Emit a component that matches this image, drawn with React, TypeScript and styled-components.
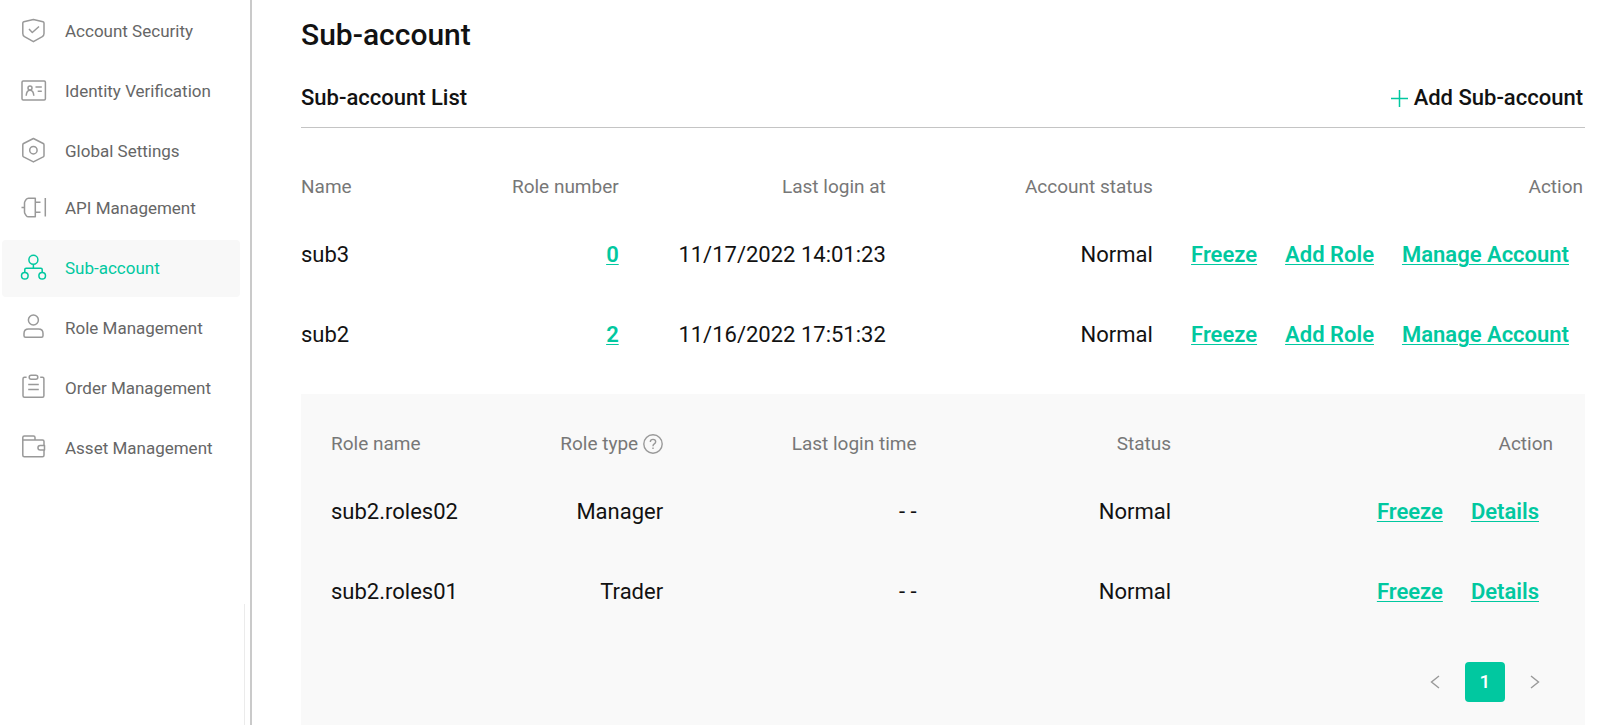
import React from "react";
import styled, { createGlobalStyle } from "styled-components";

const GlobalStyle = createGlobalStyle`
  *, *::before, *::after { box-sizing: border-box; }
  body {
    margin: 0;
    background: #fff;
    color: #121212;
    font-family: Roboto, "Liberation Sans", sans-serif;
    font-size: 22px;
    line-height: 28px;
  }
`;

const green = "#01c8a0";

const Page = styled.div`
  display: flex;
  min-height: 100vh;
`;

const Sidebar = styled.aside`
  display: flex;
  flex-direction: column;
  flex: none;
  width: 252px;
  padding: 3px 5px 0 2px;
  border-right: 2px solid #cacaca;
`;

const Nav = styled.nav`
  margin-right: 5px;
  padding-bottom: 127px;
`;

const NavGroup = styled.ul`
  display: flex;
  flex-direction: column;
  gap: 3px;
  margin: 0;
  padding: 0;
  list-style: none;
`;

const NavLink = styled.a<{ $active?: boolean }>`
  display: flex;
  align-items: center;
  gap: 17px;
  height: 57px;
  padding: 0 0 1px 18px;
  border-radius: 4px;
  background: ${(p) => (p.$active ? "#f8f8f8" : "transparent")};
  color: ${(p) => (p.$active ? green : "#666")};
  font-size: 17px;
  line-height: 24px;
  white-space: nowrap;
  text-decoration: none;
`;

const NavIcon = styled.svg<{ $active?: boolean }>`
  flex: none;
  width: 28px;
  height: 28px;
  fill: none;
  stroke: ${(p) => (p.$active ? green : "#999")};
  stroke-width: 1.5;
  stroke-linejoin: round;
`;

const SidebarEdge = styled.div`
  flex: 1;
  border-right: 1px solid #ebebeb;
`;

const Main = styled.main`
  display: flex;
  flex-direction: column;
  flex: 1;
  min-width: 0;
  padding: 17px 15px 0 49px;
`;

const Title = styled.h1`
  margin: 0;
  font-size: 30px;
  font-weight: 500;
  line-height: 36px;
`;

const ListHeader = styled.header`
  display: flex;
  align-items: center;
  justify-content: space-between;
  margin-top: 15px;
  padding: 16px 2px 15px 0;
  border-bottom: 1px solid #c4c4c4;
`;

const ListTitle = styled.h2`
  margin: 0;
  font-size: 22px;
  font-weight: 500;
  line-height: 28px;
`;

const AddButton = styled.button`
  display: flex;
  align-items: center;
  gap: 6px;
  padding: 0;
  border: 0;
  background: none;
  color: inherit;
  font: inherit;
  font-weight: 500;
  cursor: pointer;

  svg {
    width: 17px;
    height: 17px;
    stroke: ${green};
    stroke-width: 1.5;
  }
`;

const Table = styled.table`
  width: 100%;
  table-layout: fixed;
  border-collapse: collapse;
`;

const AccountTable = styled(Table)`
  margin: 31px 0 19px;
`;

const Col = styled.col<{ $width?: string }>`
  width: ${(p) => p.$width ?? "auto"};
`;

const HeadCell = styled.th`
  height: 56px;
  padding: 0 2px 0 0;
  color: #777;
  font-size: 19px;
  font-weight: 400;
  line-height: 24px;
  text-align: right;
  white-space: nowrap;

  &:first-child { padding: 0; text-align: left; }
`;

const HeadWithHelp = styled.span`
  display: flex;
  align-items: center;
  justify-content: flex-end;
  gap: 5px;
`;

const HelpButton = styled.button`
  display: flex;
  padding: 0;
  border: 0;
  background: none;
  cursor: pointer;

  svg {
    width: 20px;
    height: 20px;
    fill: none;
    stroke: #999;
    stroke-width: 1.4;
  }
`;

const Cell = styled.td`
  height: 80px;
  padding: 0 2px 0 0;
  text-align: right;
  white-space: nowrap;

  &:first-child { padding: 0; text-align: left; }
`;

const Actions = styled.div`
  display: flex;
  justify-content: flex-end;
  gap: 28px;
  padding-right: 14px;
`;

const Link = styled.a`
  color: ${green};
  font-weight: 600;
  text-decoration: underline;
  text-decoration-thickness: 1px;
  text-underline-offset: 2px;
`;

const RolesPanel = styled.section`
  flex: 1;
  padding: 22px 30px 23px;
  background: #f9f9f9;
`;

const Pagination = styled.nav`
  display: flex;
  justify-content: flex-end;
  gap: 10px;
  margin-top: 30px;
`;

const PageButton = styled.button<{ $current?: boolean }>`
  display: flex;
  align-items: center;
  justify-content: center;
  width: 40px;
  height: 40px;
  padding: 0;
  border: 0;
  border-radius: 4px;
  background: ${(p) => (p.$current ? green : "transparent")};
  color: #fff;
  font: inherit;
  font-size: 19px;
  font-weight: 500;
  cursor: pointer;

  svg {
    width: 10px;
    height: 14px;
    fill: none;
    stroke: #999;
    stroke-width: 1.4;
  }
`;

type NavEntry = { label: string; active?: boolean; icon: React.ReactNode };

const personalNav: NavEntry[] = [
  {
    label: "Account Security",
    icon: (
      <>
        <path d="M13.4 2.4 23 4.8q1 .3 1 1.3v10.4q0 2-1.7 3.2l-8.9 5-8.9-5q-1.7-1.2-1.7-3.2V6.1q0-1 1-1.3Z" />
        <path d="m9 12 3.3 3.5 6.7-6" />
      </>
    ),
  },
  {
    label: "Identity Verification",
    icon: (
      <>
        <rect x="2" y="4" width="23.4" height="19" rx="1.2" />
        <circle cx="10" cy="11" r="2" />
        <path d="M6.2 18.8c.2-3.3 1.5-5.6 3.8-5.6s3.6 2.3 3.8 5.6M15.5 10h6.3M17.7 14.2h4.1" />
      </>
    ),
  },
  {
    label: "Global Settings",
    icon: (
      <>
        <path d="m13.4 1.5 9.8 5q.8.5.8 1.4v10.6q0 .9-.8 1.4l-9.8 5-9.8-5q-.8-.5-.8-1.4V7.9q0-.9.8-1.4Z" />
        <circle cx="13.4" cy="13.2" r="3.7" />
      </>
    ),
  },
];

const managementNav: NavEntry[] = [
  {
    label: "API Management",
    icon: (
      <path d="M15.3 4.2v18.6H8.5q-1.5 0-2.3-1.2l-1.1-1.7q-.6-.9-.6-2V9.1q0-1.1.6-2l1.1-1.7q.8-1.2 2.3-1.2ZM1.5 13.5h3M15.3 8.3h5.2M15.3 18.3h5.2M25.3 4v18.5" />
    ),
  },
  {
    label: "Sub-account",
    active: true,
    icon: (
      <>
        <circle cx="13.4" cy="5.8" r="4.5" />
        <circle cx="4.8" cy="21.8" r="3.3" />
        <circle cx="22.2" cy="21.8" r="3.3" />
        <path d="M13.4 10.3v3.9M4.8 18.5v-3q0-1.3 1.3-1.3h14.8q1.3 0 1.3 1.3v3" />
      </>
    ),
  },
  {
    label: "Role Management",
    icon: (
      <>
        <circle cx="13.4" cy="6" r="5" />
        <path d="M4 21.8v-2.3q0-4.5 4.5-4.5h10q4.5 0 4.5 4.5v2.3q0 1.5-1.5 1.5h-16q-1.5 0-1.5-1.5Z" />
      </>
    ),
  },
  {
    label: "Order Management",
    icon: (
      <>
        <path d="M6.6 3.2H4.5Q3 3.2 3 4.7v17.1q0 1.5 1.5 1.5h17.9q1.5 0 1.5-1.5V4.7q0-1.5-1.5-1.5h-2.2M8.2 10.5h10.6M8.2 15.5h10.6" />
        <rect x="9.2" y="1.2" width="8.6" height="4" rx="2" />
      </>
    ),
  },
  {
    label: "Asset Management",
    icon: (
      <>
        <path d="M24 11.5V7.6q0-1.5-1.5-1.5H2.8v15.1q0 1.5 1.5 1.5h18.2q1.5 0 1.5-1.5V16" />
        <path d="M2.8 6.1V3.6q0-1.5 1.5-1.5h9.2q1.5 0 1.5 1.5v2.5M24.5 11.5h-4.3a2.2 2.2 0 0 0 0 4.5h4.3Z" />
      </>
    ),
  },
];

const accounts = [
  { name: "sub3", roles: 0, lastLogin: "11/17/2022 14:01:23", status: "Normal" },
  { name: "sub2", roles: 2, lastLogin: "11/16/2022 17:51:32", status: "Normal" },
];

const roles = [
  { name: "sub2.roles02", type: "Manager", lastLogin: "- -", status: "Normal" },
  { name: "sub2.roles01", type: "Trader", lastLogin: "- -", status: "Normal" },
];

function NavList({ entries }: { entries: NavEntry[] }) {
  return (
    <NavGroup>
      {entries.map(({ label, active, icon }) => (
        <li key={label}>
          <NavLink href="#" $active={active} aria-current={active ? "page" : undefined}>
            <NavIcon viewBox="0 0 28 28" $active={active} aria-hidden="true">
              {icon}
            </NavIcon>
            {label}
          </NavLink>
        </li>
      ))}
    </NavGroup>
  );
}

function Columns({ widths }: { widths: string[] }) {
  return (
    <colgroup>
      {widths.map((width, i) => (
        <Col key={i} $width={width} />
      ))}
      <Col />
    </colgroup>
  );
}

function RowActions({ labels }: { labels: string[] }) {
  return (
    <Actions>
      {labels.map((label) => (
        <Link href="#" key={label}>
          {label}
        </Link>
      ))}
    </Actions>
  );
}

export default function App() {
  return (
    <Page>
      <GlobalStyle />
      <Sidebar>
        <Nav aria-label="Account">
          <NavList entries={personalNav} />
          <NavList entries={managementNav} />
        </Nav>
        <SidebarEdge />
      </Sidebar>
      <Main>
        <Title>Sub-account</Title>
        <ListHeader>
          <ListTitle>Sub-account List</ListTitle>
          <AddButton type="button">
            <svg viewBox="0 0 17 17" aria-hidden="true">
              <path d="M8.5 0v17M0 8.5h17" />
            </svg>
            Add Sub-account
          </AddButton>
        </ListHeader>
        <AccountTable>
          <Columns widths={["12%", "12.9%", "20.8%", "20.8%"]} />
          <thead>
            <tr>
              <HeadCell scope="col">Name</HeadCell>
              <HeadCell scope="col">Role number</HeadCell>
              <HeadCell scope="col">Last login at</HeadCell>
              <HeadCell scope="col">Account status</HeadCell>
              <HeadCell scope="col">Action</HeadCell>
            </tr>
          </thead>
          <tbody>
            {accounts.map((account) => (
              <tr key={account.name}>
                <Cell>{account.name}</Cell>
                <Cell>
                  <Link href="#">{account.roles}</Link>
                </Cell>
                <Cell>{account.lastLogin}</Cell>
                <Cell>{account.status}</Cell>
                <Cell>
                  <RowActions labels={["Freeze", "Add Role", "Manage Account"]} />
                </Cell>
              </tr>
            ))}
          </tbody>
        </AccountTable>
        <RolesPanel aria-label="Roles">
          <Table>
            <Columns widths={["14%", "13.3%", "20.7%", "20.8%"]} />
            <thead>
              <tr>
                <HeadCell scope="col">Role name</HeadCell>
                <HeadCell scope="col">
                  <HeadWithHelp>
                    Role type
                    <HelpButton type="button" aria-label="About role types">
                      <svg viewBox="0 0 20 20" aria-hidden="true">
                        <circle cx="10" cy="10" r="9.2" />
                        <path d="M7.3 8q.1-2.6 2.7-2.6T12.7 7.8q0 1.2-1.4 2.1T10 12.2M10 13.5V15" />
                      </svg>
                    </HelpButton>
                  </HeadWithHelp>
                </HeadCell>
                <HeadCell scope="col">Last login time</HeadCell>
                <HeadCell scope="col">Status</HeadCell>
                <HeadCell scope="col">Action</HeadCell>
              </tr>
            </thead>
            <tbody>
              {roles.map((role) => (
                <tr key={role.name}>
                  <Cell>{role.name}</Cell>
                  <Cell>{role.type}</Cell>
                  <Cell>{role.lastLogin}</Cell>
                  <Cell>{role.status}</Cell>
                  <Cell>
                    <RowActions labels={["Freeze", "Details"]} />
                  </Cell>
                </tr>
              ))}
            </tbody>
          </Table>
          <Pagination aria-label="Role pages">
            <PageButton type="button" aria-label="Previous page">
              <svg viewBox="0 0 10 14" aria-hidden="true">
                <path d="M9 1 1.5 7 9 13" />
              </svg>
            </PageButton>
            <PageButton type="button" $current aria-current="page">
              1
            </PageButton>
            <PageButton type="button" aria-label="Next page">
              <svg viewBox="0 0 10 14" aria-hidden="true">
                <path d="M1 1 8.5 7 1 13" />
              </svg>
            </PageButton>
          </Pagination>
        </RolesPanel>
      </Main>
    </Page>
  );
}
